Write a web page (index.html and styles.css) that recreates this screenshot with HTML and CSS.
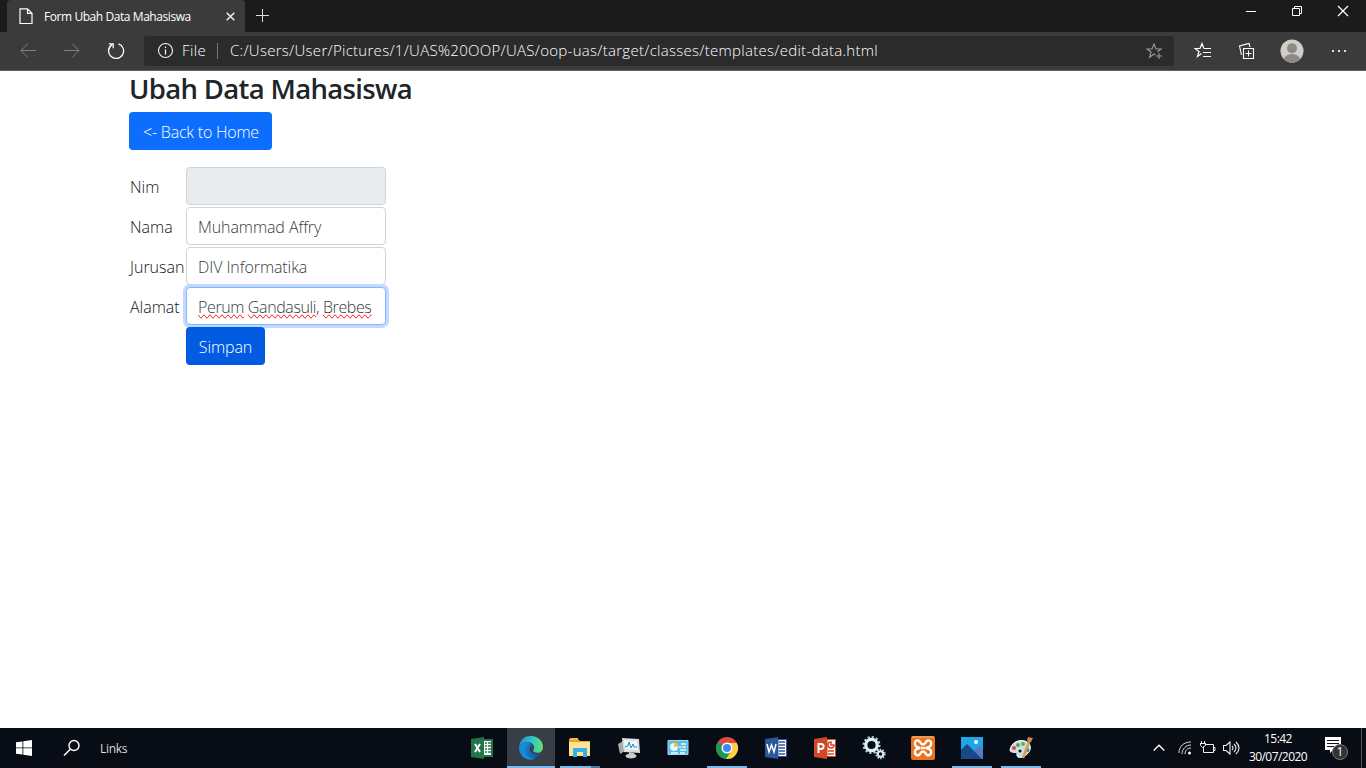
FILE: index.html
```html
<!DOCTYPE html>
<html lang="id">
<head>
<meta charset="utf-8">
<title>Form Ubah Data Mahasiswa</title>
<link rel="stylesheet" href="styles.css">
</head>
<body>
<header class="titlebar">
  <div class="tab">
    <svg class="tab-icon" width="14" height="17" viewBox="0 0 14 17"><path d="M1 .8H8.5L13 5.3V15.5H1ZM8.5 .8V5.3H13" fill="none" stroke="#fff" stroke-width="1.2"/></svg>
    <span class="tab-title">Form Ubah Data Mahasiswa</span>
    <svg class="tab-close" width="9" height="9" viewBox="0 0 9 9"><path d="M.7 .7L8.3 8.3M8.3 .7L.7 8.3" stroke="#eee" stroke-width="1.5"/></svg>
  </div>
  <svg class="new-tab" width="13" height="13" viewBox="0 0 13 13"><path d="M6.5 0V13M0 6.5H13" stroke="#ddd"/></svg>
  <svg class="window-controls" width="104" height="12" viewBox="0 0 104 12"><g fill="none" stroke="#fff"><path d="M0 6.5H10M46.5 3.5H53.5V10.5H46.5ZM48.5 3V1.5H55.5V8.5H54"/><path d="M92 1L102 11M102 1L92 11" stroke-width="1.2"/></g></svg>
</header>
<nav class="toolbar">
  <svg class="nav-icon back" width="16" height="16" viewBox="0 0 16 16"><path d="M16 7.500H1M8 .5L1 7.500L8 14.500" fill="none" stroke="#808080"/></svg>
  <svg class="nav-icon forward" width="16" height="16" viewBox="0 0 16 16"><path d="M0 7.500H15M8 .5L15 7.500L8 14.500" fill="none" stroke="#808080"/></svg>
  <svg class="nav-icon reload" width="18" height="18" viewBox="0 0 18 18"><path d="M11.500 1.800A7.500 7.500 0 1 1 5 2.600M1.800 1.800H6.200V6.200" fill="none" stroke="#fff" stroke-width="1.300"/></svg>
  <div class="address">
    <svg width="16" height="16" viewBox="0 0 16 16"><circle cx="8.500" cy="7.500" r="7" fill="none" stroke="#eee" stroke-width="1.100"/><path d="M8.500 6.500V11.500M8.500 3.500V5" stroke="#fff" stroke-width="1.200"/></svg>
    <span class="scheme">File</span><span class="divider"></span>
    <span class="url">C:/Users/User/Pictures/1/UAS%20OOP/UAS/oop-uas/target/classes/templates/edit-data.html</span>
    <svg class="add-favorite" width="17" height="17" viewBox="0 0 17 17"><path d="M9.500 12L8 11L3.600 14.300L5 9L1 6H6L8 1L10 6H15L11.500 8.700M13 10V16M10 13H16" fill="none" stroke="#999" stroke-width="1.100"/></svg>
  </div>
  <div class="browser-actions">
    <svg width="18" height="18" viewBox="0 0 18 18"><path d="M7.500 11.500L3.500 14.500L5 9.500L1 6.500H6L8 1.500L9.700 6M9.500 6.500H17M9 10.500H17M9 14.500H17" fill="none" stroke="#fff" stroke-width="1.200"/></svg>
    <svg width="18" height="18" viewBox="0 0 18 18"><path d="M5.500 6.500H15.500V16.500H5.500ZM10.500 8.500V14.500M7.500 11.500H13.500M3.500 13L1.500 4L11 1.500L12 5" fill="none" stroke="#fff" stroke-width="1.100"/></svg>
    <svg width="24" height="24" viewBox="0 0 24 24"><defs><clipPath id="avatar"><circle cx="12" cy="12" r="11.500"/></clipPath></defs><g clip-path="url(#avatar)"><path fill="#d1cec9" d="M0 0H24V24H0Z"/><circle cx="12" cy="9.300" r="5" fill="#8d8985"/><ellipse cx="12" cy="21" rx="8.500" ry="6" fill="#8d8985"/></g></svg>
    <svg width="18" height="18" viewBox="0 0 18 18"><path d="M2 8H4V10H2ZM8 8H10V10H8ZM14 8H16V10H14Z" fill="#ddd"/></svg>
  </div>
</nav>
<main class="page">
  <h2 class="heading">Ubah Data Mahasiswa</h2>
  <a class="btn btn-home">&lt;- Back to Home</a>
  <form class="form">
    <label class="label">Nim</label><div class="field disabled"></div>
    <label class="label">Nama</label><div class="field"><span class="nama">Muhammad Affry</span></div>
    <label class="label">Jurusan</label><div class="field"><span class="nama">DIV Informatika</span></div>
    <label class="label">Alamat</label><div class="field focused"><span class="address-value"><span class="misspelled">Perum</span> <span class="misspelled">Gandasuli</span>, <span class="misspelled">Brebes</span></span></div>
    <span></span><a class="btn btn-save">Simpan</a>
  </form>
</main>
<footer class="taskbar">
  <svg class="start" width="16" height="16" viewBox="0 0 16 16"><path fill="#fff" d="M0 2.300L6.500 1.400V7.500H0ZM7.300 1.300L16 0V7.500H7.300ZM0 8.300H6.500V14.600L0 13.700ZM7.300 8.300H16V16L7.300 14.700Z"/></svg>
  <svg class="search" width="18" height="18" viewBox="0 0 18 18"><circle cx="11" cy="6.500" r="5" fill="none" stroke="#fff" stroke-width="1.400"/><path d="M7.300 10.200L1 16.500" stroke="#fff" stroke-width="1.500"/></svg>
  <span class="links">Links</span>
  <div class="apps">
    <div class="app"><svg width="24" height="24" viewBox="0 0 24 24"><path fill="#fff" d="M12 3H23V21H12Z"/><path fill="#237447" d="M1 3L14 1V23L1 21ZM14 3H23V21H14V19H21V5H14Z"/><path d="M15 7H17M18 7H21M15 10H17M18 10H21M15 13H17M18 13H21M15 16H17M18 16H21" stroke="#237447" stroke-width="1.500"/><path d="M5 8L10 16M10 8L5 16" stroke="#fff" stroke-width="2"/></svg></div>
    <div class="app active open"><svg width="26" height="26" viewBox="0 0 26 26"><defs><linearGradient id="edge-top"><stop stop-color="#238cc9"/><stop offset=".55" stop-color="#30c5cf"/><stop offset="1" stop-color="#69df62"/></linearGradient><linearGradient id="edge-low"><stop stop-color="#1679c9"/><stop offset="1" stop-color="#164f91"/></linearGradient></defs><path fill="url(#edge-top)" d="M1 12C2 4 7 1 13 1C20 1 25 6 25 12C25 17 21 19 16 17C14 16 16 15 16 12C16 8 10 6 6 8C3 9 2 10 1 12Z"/><path fill="#168bd2" d="M1 12C3 7 9 6 13 9C10 10 8 13 9 17C10 21 14 24 18 23C10 28 1 22 1 12Z"/><path fill="url(#edge-low)" d="M13 9C8 10 6 14 8 19C11 25 18 25 23 18C19 20 14 19 12 16C11 13 12 11 15 11C14 10 14 9 13 9Z"/></svg></div>
    <div class="app open grouped"><svg width="24" height="24" viewBox="0 0 24 24"><path fill="#e3a52c" d="M1 3H10L12 5H22V12H1Z"/><path fill="#ffe394" d="M1 6H22V20H1Z"/><path fill="#f8bb36" d="M2 2H10V4H2Z"/><path fill="#36b1e8" d="M5 12H19V21H15V16H9V21H5Z"/></svg></div>
    <div class="app"><svg width="24" height="24" viewBox="0 0 24 24"><path fill="#aaa" d="M1 8L6 5L8 15L3 18Z"/><path fill="#ddd" d="M5 2L22 3L23 17L7 16Z"/><path fill="#eef9fc" d="M7 4L20 5L21 14L8 13Z"/><path d="M8 11L11 10L12 6L14 12L16 8L17 11L20 11" fill="none" stroke="#248dc1"/><path fill="#c9c9c9" d="M12 16L17 17L18 20H12Z"/><ellipse cx="14" cy="20" rx="5.500" ry="2.500" fill="#ccc"/></svg></div>
    <div class="app"><svg width="24" height="24" viewBox="0 0 24 24"><path fill="#5abae5" stroke="#9bdff9" d="M2 4.500H22V18.500H2Z"/><circle cx="8" cy="11" r="4" fill="#e8faff"/><path d="M8 11V6A5 5 0 0 1 12.500 10Z" fill="#f5b835"/><path d="M15 8H20M13 11H15M16 11H20M14 14H20M5 17H12M14 17H19" stroke="#e7fbff" stroke-width="1.500"/></svg></div>
    <div class="app open"><svg width="24" height="24" viewBox="0 0 24 24"><circle cx="12" cy="12" r="11" fill="#dd4b40"/><path fill="#149c58" d="M12 12L2.500 6.500A11 11 0 0 0 12 23L17 14Z"/><path fill="#ffcd42" d="M12 7H21.800A11 11 0 0 1 11 23L17 14Z"/><circle cx="12" cy="12" r="5.500" fill="#fff"/><circle cx="12" cy="12" r="4" fill="#4385ef"/></svg></div>
    <div class="app"><svg width="24" height="24" viewBox="0 0 24 24"><path fill="#fff" stroke="#2b579a" d="M14 3.500H22.500V20.500H14Z"/><path d="M15 6H21M15 9H21M15 12H21M15 15H21M15 18H21" stroke="#2b579a" stroke-width="1.300"/><path fill="#2b579a" d="M1 3L14 1V23L1 21Z"/><path d="M3 8L5 16L7.500 9L10 16L12 8" fill="none" stroke="#fff" stroke-width="1.500"/></svg></div>
    <div class="app"><svg width="24" height="24" viewBox="0 0 24 24"><path fill="#fff" stroke="#d24726" d="M14 3.500H22.500V20.500H14Z"/><path d="M15 15H21M15 18H21M18 6A3 3 0 1 0 21 9H18Z" fill="none" stroke="#d24726" stroke-width="1.500"/><path fill="#d24726" d="M1 3L14 1V23L1 21Z"/><path d="M5.500 17V8H8C12 8 11 13 8 13H5.500" fill="none" stroke="#fff" stroke-width="2"/></svg></div>
    <div class="app"><svg width="24" height="24" viewBox="0 0 24 24"><g fill="none"><circle cx="9.500" cy="9" r="7.500" stroke="#acd3e8" stroke-width="3" stroke-dasharray="2 1.930"/><circle cx="9.500" cy="9" r="5.700" stroke="#e1edf4" stroke-width="3.200"/><circle cx="18.500" cy="18" r="4.200" stroke="#b1d5e7" stroke-width="2" stroke-dasharray="1.500 1.140"/><circle cx="18.500" cy="18" r="2.700" stroke="#d9eaf2" stroke-width="2"/></g></svg></div>
    <div class="app"><svg width="24" height="24" viewBox="0 0 24 24"><rect width="24" height="24" rx="2" fill="#e97520"/><path d="M1 1H23" stroke="#ffb778"/><path d="M9.500 12H14.500M9 12C2 11 3 4 7 4.500C10 5 9 8.500 12 8.500C15 8.500 14 5 17 4.500C21 4 22 11 15 12C22 13 21 19 17 19.500C14 19 15 15.500 12 15.500C9 15.500 10 19 7 19.500C3 19 2 13 9 12" fill="none" stroke="#fff" stroke-width="2.300"/></svg></div>
    <div class="app open"><svg width="24" height="24" viewBox="0 0 24 24"><path fill="#21a5e9" d="M1 1H23V23H1Z"/><path fill="#5a78c5" d="M13 16L19 10L23 14V23H13Z"/><path fill="#174887" d="M1 14L7 8L22 23H1Z"/><circle cx="16" cy="6" r="2" fill="#fff"/></svg></div>
    <div class="app open"><svg width="24" height="24" viewBox="0 0 24 24"><path fill="#c9dfe9" stroke="#eef8fd" d="M1 14C2 7 9 3 16 5C23 7 23 15 17 19C12 23 7 22 8 18C9 15 1 18 1 14Z"/><circle cx="5" cy="12" r="2" fill="#dc4932"/><circle cx="9" cy="9" r="2" fill="#57a651"/><circle cx="14" cy="8" r="2" fill="#62b447"/><circle cx="18" cy="14" r="2.300" fill="#2682c4"/><circle cx="11" cy="15" r="1.500" fill="#091019"/><path d="M14 22L20 6" stroke="#e59b42" stroke-width="2.500"/><path d="M18 4L19 1L24 2L22 6L20 7Z" fill="#bd8b58"/></svg></div>
  </div>
  <div class="tray">
    <svg width="12" height="16" viewBox="0 0 12 16"><path d="M.7 10.500L6 5.200L11.300 10.500" fill="none" stroke="#fff" stroke-width="1.300"/></svg>
    <svg class="wifi" width="14" height="16" viewBox="0 0 14 16"><g fill="none" stroke="#ddd"><path d="M1 13C1 6 6 2 13 2M4 14C4 9 8 5 13 5M7 14C7 11 9 8 13 8"/></g><circle cx="11.500" cy="13" r="1.500" fill="#fff"/></svg>
    <svg class="battery" width="17" height="16" viewBox="0 0 17 16"><path d="M6.500 4.500H14.500V12.500H4.500V9M15 7.500H16V10.500H15M2.500 1V3M5.500 1V3M1 3.500H7M1.500 3V5.500L3.500 7.500L6.500 5.500V3M4.500 7V10" fill="none" stroke="#eee"/></svg>
    <svg class="speaker" width="18" height="16" viewBox="0 0 18 16"><path d="M.5 5.500H3L7 2V14L3 10.500H.5ZM9 6Q11 8 9 10M11 4Q15 8 11 12M13 2Q19 8 13 14" fill="none" stroke="#eee" stroke-width="1.100"/></svg>
    <div class="clock"><span class="time">15:42</span><span class="date">30/07/2020</span></div>
    <div class="notifications"><svg width="16" height="16" viewBox="0 0 16 16"><path fill="#fff" d="M0 0H16V13H8L5 16V13H0Z"/><path d="M2 3.500H14M2 6.500H14M2 9.500H9" stroke="#101319"/></svg><span class="badge">1</span></div>
    <span class="show-desktop"></span>
  </div>
</footer>
</body>
</html>
```
FILE: styles.css
```css
* { box-sizing: border-box; }
body { margin: 0; width: 1366px; height: 768px; overflow: hidden; display: flex; flex-direction: column; font-family: "Open Sans", "Noto Sans", sans-serif; background: #fff; }
svg { display: block; flex: none; }
span, label, a, h2 { white-space: nowrap; }
.titlebar { height: 32px; flex: none; background: #1b1b1b; display: flex; padding-left: 7px; }
.tab { width: 238px; height: 32px; background: #3b3b3b; border-radius: 4px 4px 0 0; display: flex; align-items: center; padding-left: 12px; color: #fff; }
.tab-title { margin-left: 11px; width: 148px; font-size: 12px; letter-spacing: -.43px; }
.tab-close { margin-left: 34px; }
.new-tab { margin: 9px 0 0 11px; }
.window-controls { margin: 5px 0 0 977px; }
.toolbar { height: 39px; flex: none; background: #3b3b3b; border-bottom: 1px solid #615e5e; display: flex; align-items: center; padding-left: 20px; }
.forward { margin-left: 28px; }
.reload { margin-left: 27px; }
.address { margin-left: 19px; width: 1030px; height: 30px; border-radius: 3px; background: #2b2b2b; display: flex; align-items: center; padding: 0 11px 0 13px; color: #fff; font-size: 15px; }
.scheme { margin-left: 9px; width: 35px; font-weight: 300; letter-spacing: .4px; padding-bottom: 2px; }
.divider { height: 16px; border-left: 1px solid #777; margin-right: 12px; }
.url { font-weight: 300; letter-spacing: .285px; padding-bottom: 2px; }
.add-favorite { margin-left: auto; }
.browser-actions { display: flex; align-items: center; margin-left: 20px; gap: 26px; }
.browser-actions svg:nth-child(2) { margin-right: -2px; }
.page { flex: 1; padding-left: 129px; display: flex; flex-direction: column; align-items: flex-start; color: #111518; }
.heading { margin: 1px 0 6px; font-size: 27.5px; line-height: 34px; font-weight: 600; letter-spacing: -.67px; color: #212529; }
.btn { height: 38px; border-radius: 4px; color: #fff; display: flex; align-items: center; justify-content: center; font-size: 16px; font-weight: 300; padding-top: 1px; }
.btn-home { width: 143px; background: #0d6efd; letter-spacing: -.22px; padding-left: 1px; }
.form { display: grid; grid-template-columns: 57px 200px; grid-auto-rows: 38px; row-gap: 2px; margin: 17px 0 0; }
.label { display: flex; align-items: center; font-size: 16px; font-weight: 300; padding: 1px 0 0 1px; }
.field { border: 1px solid #ced4da; border-radius: 4px; background: #fff; color: #343a40; display: flex; align-items: center; padding: 1px 11px 0; font-size: 16px; font-weight: 300; }
.nama { letter-spacing: -.08px; }
.address-value { letter-spacing: -.38px; }
.disabled { background: #e9ecef; }
.focused { border-color: #86b7fe; box-shadow: 0 0 0 3px #c2daff; }
.misspelled { text-decoration: spelling-error; }
.btn-save { width: 79px; background: #025ce2; letter-spacing: -.1px; }
.taskbar { height: 40px; flex: none; background: #080c14; display: flex; align-items: center; color: #fff; padding-left: 16px; }
.search { margin-left: 31px; }
.links { margin-left: 19px; width: 27px; font-size: 12px; color: #ddd; letter-spacing: -.3px; }
.apps { height: 40px; margin-left: 331px; display: flex; gap: 1px; }
.app { width: 48px; height: 40px; display: flex; align-items: center; justify-content: center; position: relative; }
.active { background: #383e46; }
.open::after { content: ""; position: absolute; height: 2px; bottom: 0; left: 4px; right: 4px; background: #76b9ed; }
.active::after { left: 0; right: 0; }
.grouped::after { background: linear-gradient(90deg, #76b9ed 31px, #4c7599 31px); }
.tray { height: 40px; display: flex; align-items: center; margin-left: 108px; }
.wifi { margin-left: 13px; }
.battery { margin-left: 7px; }
.speaker { margin-left: 7px; }
.clock { width: 60px; margin-left: 7px; display: flex; flex-direction: column; align-items: center; font-size: 12px; line-height: 18px; }
.time, .date { letter-spacing: -.55px; }
.notifications { position: relative; width: 24px; height: 22px; margin-left: 17px; }
.badge { position: absolute; left: 7px; top: 7px; width: 16px; height: 16px; border-radius: 50%; border: 1px solid #777; background: #333; font-size: 12px; line-height: 14px; text-align: center; }
.show-desktop { height: 40px; border-left: 1px solid #555; margin-left: 12px; }
```
